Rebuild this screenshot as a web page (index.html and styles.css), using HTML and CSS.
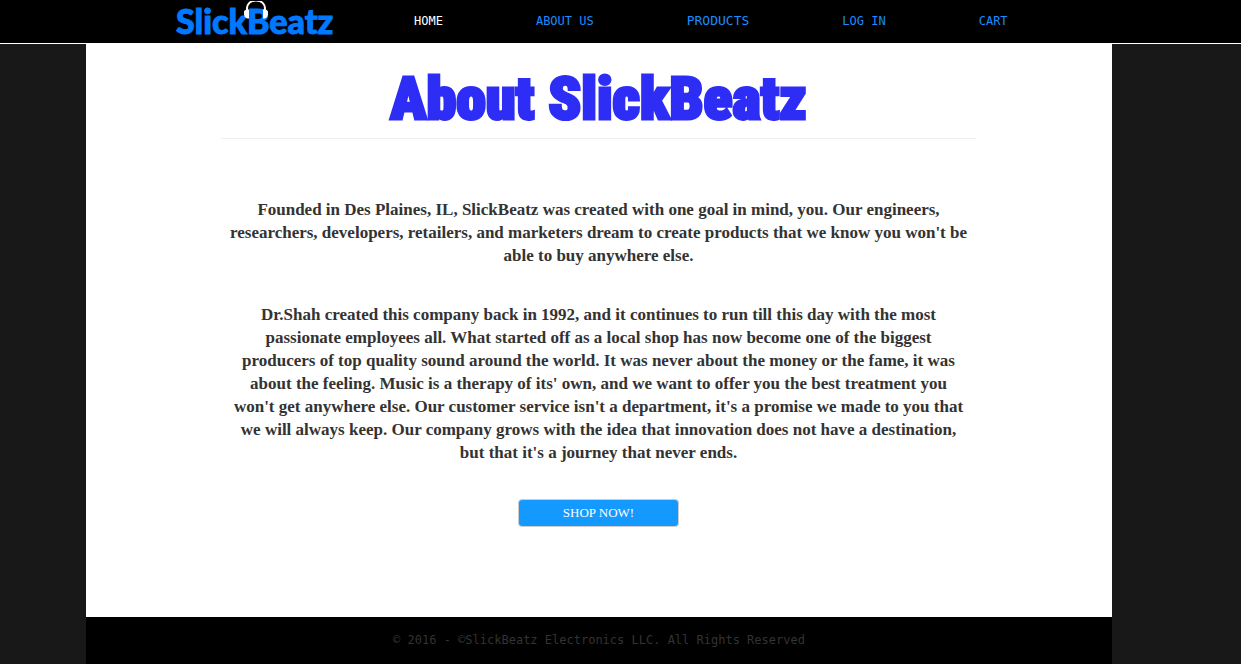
FILE: index.html
```html
<!DOCTYPE html>
<html lang="en">
<head>
<meta charset="utf-8">
<title>About SlickBeatz</title>
<link rel="stylesheet" href="styles.css">
</head>
<body>
<header class="site-header">
  <a class="logo" href="#">SlickBeatz
    <svg class="headphones" viewBox="0 0 26 18" aria-hidden="true">
      <path d="M4 11V8C4 2.500 8-0.500 13-0.500s9 3 9 8.500v3" fill="none" stroke="#fff" stroke-width="2"/>
      <path d="M1 11q0-2 3-2.500h2v9H4Q1 16 1 13.500zM25 11q0-2-3-2.500h-2v9h2q3-1.500 3-4z" fill="#fff"/>
    </svg>
  </a>
  <nav class="menu">
    <a class="menu-link active" href="#">HOME</a>
    <a class="menu-link" href="#">ABOUT US</a>
    <a class="menu-link large" href="#">PRODUCTS</a>
    <a class="menu-link" href="#">LOG IN</a>
    <a class="menu-link" href="#">CART</a>
  </nav>
</header>
<div class="page">
  <main class="content">
    <h1 class="title">About SlickBeatz</h1>
    <div class="story">
      <p>Founded in Des Plaines, IL, SlickBeatz was created with one goal in mind, you. Our engineers, researchers, developers, retailers, and marketers dream to create products that we know you won't be able to buy anywhere else.</p>
      <p>Dr.Shah created this company back in 1992, and it continues to run till this day with the most passionate employees all. What started off as a local shop has now become one of the biggest producers of top quality sound around the world. It was never about the money or the fame, it was about the feeling. Music is a therapy of its' own, and we want to offer you the best treatment you won't get anywhere else. Our customer service isn't a department, it's a promise we made to you that we will always keep. Our company grows with the idea that innovation does not have a destination, but that it's a journey that never ends.</p>
    </div>
    <button class="shop" type="button">SHOP NOW!</button>
  </main>
  <footer class="footer">© 2016 - ©SlickBeatz Electronics LLC. All Rights Reserved</footer>
</div>
</body>
</html>
```
FILE: styles.css
```css
* { box-sizing: border-box; }
body {
  margin: 0;
  min-height: 100vh;
  display: flex;
  flex-direction: column;
  background: #181818;
  color: #333;
  font-family: "Liberation Serif", serif;
}
.site-header {
  display: flex;
  align-items: center;
  gap: 80px;
  height: 44px;
  padding: 0 0 2px 176px;
  background: #000;
  border-bottom: 1px solid #fff;
}
.logo {
  position: relative;
  width: 158px;
  color: #0078ff;
  font: 900 34px/40px Lato, sans-serif;
  text-decoration: none;
  -webkit-text-stroke: 1px #0078ff;
}
.headphones {
  position: absolute;
  left: 67px;
  top: 0;
  width: 26px;
  height: 18px;
}
.menu {
  display: flex;
  align-items: center;
  gap: 93px;
}
.menu-link {
  color: #1a8cff;
  font: 12px/20px "DejaVu Sans Mono", monospace;
  text-decoration: none;
  white-space: nowrap;
}
.menu-link.active { color: #fff; }
.menu-link.large { font-size: 13px; }
.page {
  flex: 1;
  display: flex;
  flex-direction: column;
  margin: 0 129px 0 86px;
  background: #fff;
}
.content {
  flex: 1;
  display: flex;
  flex-direction: column;
  align-items: center;
  padding: 22px 136px 20px 135px;
}
.title {
  align-self: stretch;
  margin: 0 0 59px;
  padding-bottom: 7px;
  border-bottom: 1px solid #eee;
  color: #2d2df5;
  font: 900 60px/65px "Roboto Condensed", "Open Sans Condensed", Lato, sans-serif;
  text-align: center;
  white-space: nowrap;
  -webkit-text-stroke: 3px #2d2df5;
}
.story {
  max-width: 739px;
  font-size: 17px;
  font-weight: 700;
  line-height: 23px;
  text-align: center;
}
.story p { margin: 0 0 36px; }
.story p:last-child { margin-bottom: 35px; }
.shop {
  width: 161px;
  height: 28px;
  padding: 0;
  border: 1px solid #ccc;
  border-radius: 4px;
  background: #1499ff;
  color: #fff;
  font: 13px/20px "Liberation Serif", serif;
}
.footer {
  padding: 13px 0 14px;
  background: #000;
  color: #333;
  font: 12px/20px "DejaVu Sans Mono", monospace;
  text-align: center;
}
```
